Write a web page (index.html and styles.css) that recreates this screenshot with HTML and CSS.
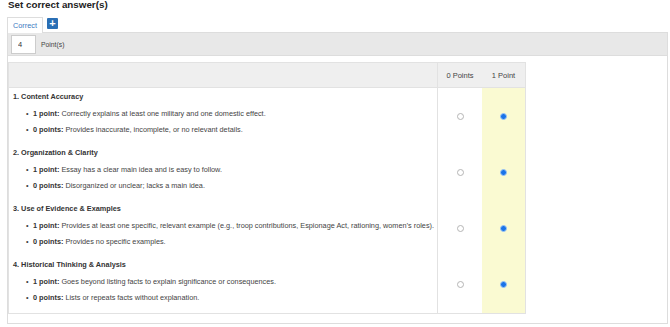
FILE: index.html
```html
<!DOCTYPE html>
<html lang="en">
<head>
    <meta charset="UTF-8">
    <meta name="viewport" content="width=device-width, initial-scale=1.0">
    <title>Set correct answer(s)</title>
    <link rel="stylesheet" href="styles.css">
</head>
<body>
    <h2 class="title">Set correct answer(s)</h2>

    <!-- Answer tabs -->
    <div class="tabs">
        <span class="tab">Correct</span>
        <span class="add-btn">+</span>
    </div>

    <div class="panel">
        <!-- Points row -->
        <div class="panel-head">
            <input class="points-input" type="text" value="4">
            <span class="points-label">Point(s)</span>
        </div>

        <!-- Rubric table -->
        <div class="panel-body">
            <table class="rubric">
                <thead>
                    <tr>
                        <th class="crit-col"></th>
                        <th class="pts-col">0 Points</th>
                        <th class="pts-col last-col">1 Point</th>
                    </tr>
                </thead>
                <tbody>
                    <tr>
                        <td class="crit">
                            <div class="crit-title">1. Content Accuracy</div>
                            <ul>
                                <li><b>1 point:</b> Correctly explains at least one military and one domestic effect.</li>
                                <li><b>0 points:</b> Provides inaccurate, incomplete, or no relevant details.</li>
                            </ul>
                        </td>
                        <td class="choice"><span class="radio"></span></td>
                        <td class="choice selected"><span class="radio on"></span></td>
                    </tr>
                    <tr>
                        <td class="crit">
                            <div class="crit-title">2. Organization &amp; Clarity</div>
                            <ul>
                                <li><b>1 point:</b> Essay has a clear main idea and is easy to follow.</li>
                                <li><b>0 points:</b> Disorganized or unclear; lacks a main idea.</li>
                            </ul>
                        </td>
                        <td class="choice"><span class="radio"></span></td>
                        <td class="choice selected"><span class="radio on"></span></td>
                    </tr>
                    <tr>
                        <td class="crit">
                            <div class="crit-title">3. Use of Evidence &amp; Examples</div>
                            <ul>
                                <li><b>1 point:</b> Provides at least one specific, relevant example (e.g., troop contributions, Espionage Act, rationing, women’s roles).</li>
                                <li><b>0 points:</b> Provides no specific examples.</li>
                            </ul>
                        </td>
                        <td class="choice"><span class="radio"></span></td>
                        <td class="choice selected"><span class="radio on"></span></td>
                    </tr>
                    <tr class="last">
                        <td class="crit">
                            <div class="crit-title">4. Historical Thinking &amp; Analysis</div>
                            <ul>
                                <li><b>1 point:</b> Goes beyond listing facts to explain significance or consequences.</li>
                                <li><b>0 points:</b> Lists or repeats facts without explanation.</li>
                            </ul>
                        </td>
                        <td class="choice"><span class="radio"></span></td>
                        <td class="choice selected"><span class="radio on"></span></td>
                    </tr>
                </tbody>
            </table>
        </div>
    </div>
</body>
</html>
```

FILE: styles.css
```css
body {
    margin: 0;
    padding: 0 2px 0 7px;
    font-family: "Liberation Sans", Arial, sans-serif;
    color: #333;
    background: #fff;
}
.title {
    margin: 0;
    padding-left: 1px;
    font-size: 9.8px;
    line-height: 10px;
    font-weight: bold;
    color: #222;
}
.tabs {
    display: flex;
    align-items: center;
    gap: 4px;
    margin-top: 7px;
    height: 15px;
}
.tab {
    box-sizing: border-box;
    height: 16px;
    margin-bottom: -1px;
    padding: 0 5px;
    line-height: 15px;
    font-size: 7.3px;
    color: #3a7bbf;
    background: #fff;
    border: 1px solid #ddd;
    border-bottom: none;
    position: relative;
    z-index: 1;
}
.add-btn {
    width: 11px;
    height: 11px;
    margin-top: -2px;
    background: #2a6fb5;
    color: #fff;
    font-size: 11px;
    font-weight: bold;
    line-height: 11px;
    text-align: center;
    border-radius: 1px;
}
.panel {
    border: 1px solid #ddd;
    height: 292px;
    box-sizing: border-box;
}
.panel-head {
    display: flex;
    align-items: center;
    gap: 5px;
    height: 22px;
    padding: 0 3px;
    background: #e8e8e8;
    border-bottom: 1px solid #ddd;
}
.points-input {
    box-sizing: border-box;
    width: 25px;
    height: 19px;
    padding: 0 6px;
    font-family: inherit;
    font-size: 7.5px;
    color: #333;
    border: 1px solid #ccc;
    background: #fff;
}
.points-label {
    font-size: 6.8px;
    color: #444;
}
.panel-body {
    padding: 6px 0 0 0;
}
.rubric {
    width: 518px;
    table-layout: fixed;
    border-collapse: collapse;
    border: 1px solid #e2e2e2;
    font-size: 7.3px;
    color: #444;
}
.rubric th {
    height: 24px;
    padding: 0;
    background: #efefef;
    font-weight: normal;
    font-size: 7.5px;
    color: #444;
    border-bottom: 1px solid #e2e2e2;
}
.crit-col {
    width: 428px;
    border-right: 1px solid #e2e2e2;
}
.pts-col {
    width: 44px;
}
.last-col {
    width: 43px;
}
.crit {
    height: 56px;
    box-sizing: border-box;
    padding: 4px 0 0 4px;
    vertical-align: top;
    border-right: 1px solid #e2e2e2;
}
.last .crit {
    height: 58px;
}
.crit-title {
    font-weight: bold;
    line-height: 10px;
    color: #333;
}
.crit ul {
    margin: 7px 0 0 0;
    padding-left: 21px;
    list-style: none;
}
.crit li {
    line-height: 10px;
    margin-bottom: 6px;
    white-space: nowrap;
}
.crit li::before {
    content: "•";
    display: inline-block;
    width: 7px;
    margin-left: -8px;
    color: #444;
}
.crit li b {
    color: #333;
}
.choice {
    text-align: center;
    vertical-align: middle;
    padding: 0;
}
.selected {
    background: #fafad2;
}
.radio {
    display: inline-block;
    box-sizing: border-box;
    width: 7px;
    height: 7px;
    border: 1px solid #b5b5b5;
    border-radius: 50%;
    background: #fff;
    vertical-align: middle;
}
.radio.on {
    border: 1.5px solid #9cc6f5;
    background: #1a73e8;
}
```
